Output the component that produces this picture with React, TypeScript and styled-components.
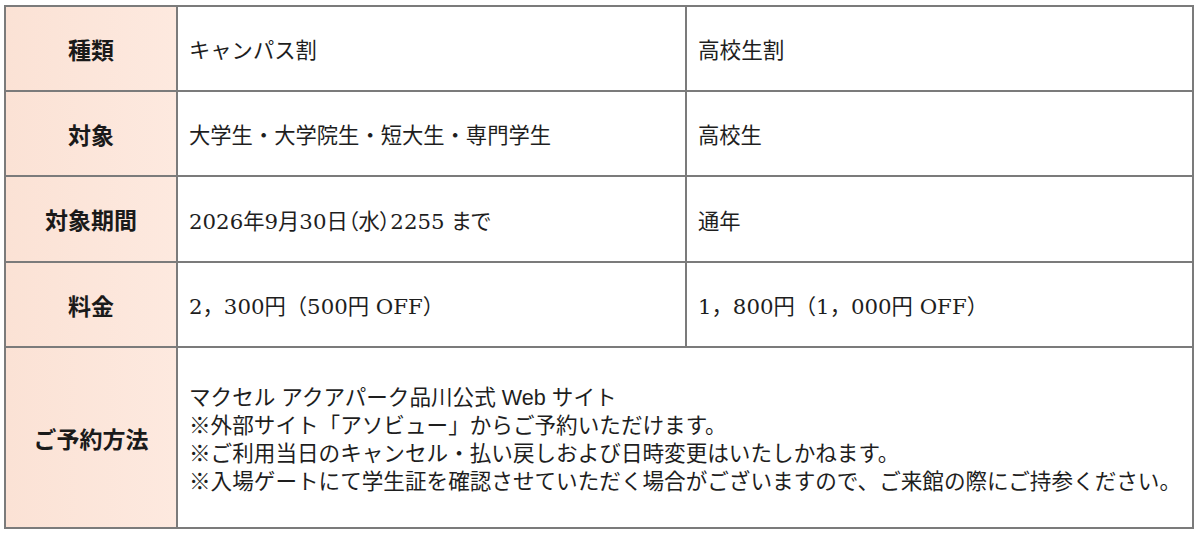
import React from "react";
import styled, { createGlobalStyle } from "styled-components";

const Global = createGlobalStyle`
  html, body { margin: 0; padding: 0; background: #ffffff; }
  body { font-family: "DejaVu Serif", "Noto Sans CJK JP", serif; color: #1e1e1e; }
`;

const Page = styled.div`
  padding: 5px 6px 0 4px;
`;

const Table = styled.table`
  width: 1190px;
  border-collapse: collapse;
  table-layout: fixed;
  border: 2px solid #7b7b7b;
`;

const Row = styled.tr<{ $h: number }>`
  height: ${(p) => p.$h}px;
`;

const Head = styled.th`
  border: 2px solid #7b7b7b;
  background: linear-gradient(to right, #fbe2d5, #fde9df);
  font-family: "Noto Sans CJK JP", sans-serif;
  font-size: 23px;
  font-weight: 600;
  color: #1a1a1a;
  text-align: center;
  vertical-align: middle;
  padding: 0;
`;

const Cell = styled.td<{ $sans?: boolean; $palt?: boolean }>`
  border: 2px solid #7b7b7b;
  background: #ffffff;
  font-family: ${(p) =>
    p.$sans
      ? `"Liberation Sans", "Noto Sans CJK JP", sans-serif`
      : `"DejaVu Serif", "Noto Sans CJK JP", serif`};
  font-size: ${(p) => (p.$sans ? "21.6px" : "21.3px")};
  font-feature-settings: ${(p) => (p.$palt ? `"palt"` : "normal")};
  font-weight: 400;
  color: #1e1e1e;
  text-align: left;
  vertical-align: middle;
  padding: 0 8px 0 11px;
  white-space: nowrap;
`;

const Lines = styled.div`
  display: flex;
  flex-direction: column;
  line-height: 28px;
  padding-top: 4px;
`;

export default function App() {
  return (
    <>
      <Global />
      <Page>
        <Table>
          <colgroup>
            <col style={{ width: 172 }} />
            <col style={{ width: 509 }} />
            <col />
          </colgroup>
          <tbody>
            <Row $h={85}>
              <Head>種類</Head>
              <Cell>キャンパス割</Cell>
              <Cell $sans>高校生割</Cell>
            </Row>
            <Row $h={85}>
              <Head>対象</Head>
              <Cell>大学生・大学院生・短大生・専門学生</Cell>
              <Cell>高校生</Cell>
            </Row>
            <Row $h={86}>
              <Head>対象期間</Head>
              <Cell $palt>2026年9月30日（水）2255 まで</Cell>
              <Cell>通年</Cell>
            </Row>
            <Row $h={85}>
              <Head>料金</Head>
              <Cell>2，300円（500円 OFF）</Cell>
              <Cell>1，800円（1，000円 OFF）</Cell>
            </Row>
            <Row $h={181}>
              <Head>ご予約方法</Head>
              <Cell colSpan={2} $sans>
                <Lines>
                  <span>マクセル アクアパーク品川公式 Web サイト</span>
                  <span>※外部サイト「アソビュー」からご予約いただけます。</span>
                  <span>※ご利用当日のキャンセル・払い戻しおよび日時変更はいたしかねます。</span>
                  <span>※入場ゲートにて学生証を確認させていただく場合がございますので、ご来館の際にご持参ください。</span>
                </Lines>
              </Cell>
            </Row>
          </tbody>
        </Table>
      </Page>
    </>
  );
}
